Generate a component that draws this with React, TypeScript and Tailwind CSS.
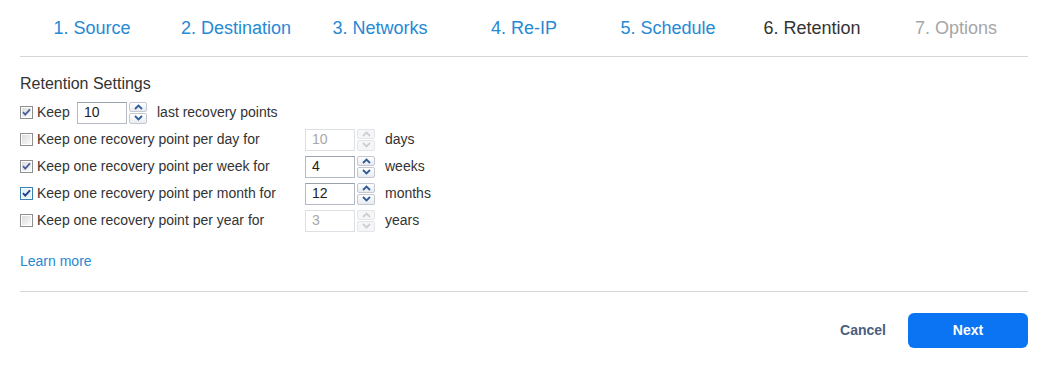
import React from "react";

const steps = [
  { label: "1. Source", state: "done" },
  { label: "2. Destination", state: "done" },
  { label: "3. Networks", state: "done" },
  { label: "4. Re-IP", state: "done" },
  { label: "5. Schedule", state: "done" },
  { label: "6. Retention", state: "active" },
  { label: "7. Options", state: "todo" },
];

type Row = { label: string; value: string; unit: string; checked: boolean; focus?: boolean };

const rows: Row[] = [
  { label: "Keep one recovery point per day for", value: "10", unit: "days", checked: false },
  { label: "Keep one recovery point per week for", value: "4", unit: "weeks", checked: true },
  { label: "Keep one recovery point per month for", value: "12", unit: "months", checked: true, focus: true },
  { label: "Keep one recovery point per year for", value: "3", unit: "years", checked: false },
];

function Checkbox({ checked, focus }: { checked: boolean; focus?: boolean }) {
  return (
    <svg width="13" height="13" viewBox="0 0 13 13" className="shrink-0">
      <defs>
        <linearGradient id="cbg" x1="0" y1="0" x2="1" y2="1">
          <stop offset="0" stopColor="#dcdcdc" />
          <stop offset="1" stopColor="#fbfbfb" />
        </linearGradient>
      </defs>
      <rect x="0.5" y="0.5" width="12" height="12" fill="#fff" stroke={focus ? "#3c7fb1" : "#8e8f8f"} />
      <rect x="2" y="2" width="9" height="9" fill={focus ? "#e6f2fb" : "url(#cbg)"} />
      {checked ? (
        <path
          d="M3 6.2 L5.2 8.6 L10 3.3"
          fill="none"
          stroke={focus ? "#1b3f8a" : "#4a5fa0"}
          strokeWidth="1.8"
        />
      ) : null}
    </svg>
  );
}

function Spinner({ value, disabled }: { value: string; disabled?: boolean }) {
  const arrow = disabled ? "#c9d0da" : "#2f5d9a";
  return (
    <div className="flex h-[22px] w-[70px] shrink-0">
      <div
        className={
          "flex h-full flex-1 items-center border pl-[6px] text-[14px] " +
          (disabled
            ? "border-[#dcdfe3] text-[#a8a8a8]"
            : "border-[#b5bac2] border-t-[#9ca2ab] text-[#222]")
        }
      >
        {value}
      </div>
      <div className="ml-[2px] flex h-full w-[18px] flex-col gap-[1px]">
        {[0, 1].map((i) => (
          <div
            key={i}
            className={
              "flex flex-1 items-center justify-center rounded-[2px] border " +
              (disabled
                ? "border-[#e3e5e8] bg-[#f6f6f6]"
                : "border-[#c3c8d0] bg-gradient-to-b from-[#ffffff] to-[#e8ebef]")
            }
          >
            <svg width="9" height="6" viewBox="0 0 9 6">
              <path
                d={i === 0 ? "M1 5 L4.5 1.5 L8 5" : "M1 1 L4.5 4.5 L8 1"}
                fill="none"
                stroke={arrow}
                strokeWidth="1.8"
              />
            </svg>
          </div>
        ))}
      </div>
    </div>
  );
}

export default function App() {
  return (
    <div className="h-[368px] w-[1048px] bg-white px-[20px] font-['Liberation_Sans',Arial,sans-serif] text-[#333]">
      <div className="grid h-[57px] grid-cols-7 items-center border-b border-[#d6d6d6]">
        {steps.map((s) => (
          <div
            key={s.label}
            className={
              "text-center text-[18px] " +
              (s.state === "active"
                ? "text-[#333]"
                : s.state === "todo"
                ? "text-[#a6a6a6]"
                : "text-[#2589d4]")
            }
          >
            {s.label}
          </div>
        ))}
      </div>

      <div className="mt-[17px] h-[20px] text-[16px] leading-[20px] text-[#333]">Retention Settings</div>

      <div className="mt-[5px] text-[14px]">
        <div className="flex h-[27px] items-center">
          <Checkbox checked />
          <span className="ml-[4px] w-[40px]">Keep</span>
          <Spinner value="10" />
          <span className="ml-[10px]">last recovery points</span>
        </div>
        {rows.map((r) => (
          <div key={r.label} className="flex h-[27px] items-center">
            <Checkbox checked={r.checked} focus={r.focus} />
            <span className="ml-[4px] w-[268px]">{r.label}</span>
            <Spinner value={r.value} disabled={!r.checked} />
            <span className="ml-[10px]">{r.unit}</span>
          </div>
        ))}
      </div>

      <div className="mt-[17px] h-[20px] text-[14px] leading-[20px] text-[#2589d4]">Learn more</div>

      <div className="mt-[20px] border-t border-[#d6d6d6]" />

      <div className="mt-[21px] flex items-center justify-end">
        <button className="mr-[22px] text-[14px] font-bold text-[#4b5e80]">Cancel</button>
        <button className="h-[35px] w-[120px] rounded-[6px] bg-[#0a74f2] text-[14px] font-bold text-white">
          Next
        </button>
      </div>
    </div>
  );
}
